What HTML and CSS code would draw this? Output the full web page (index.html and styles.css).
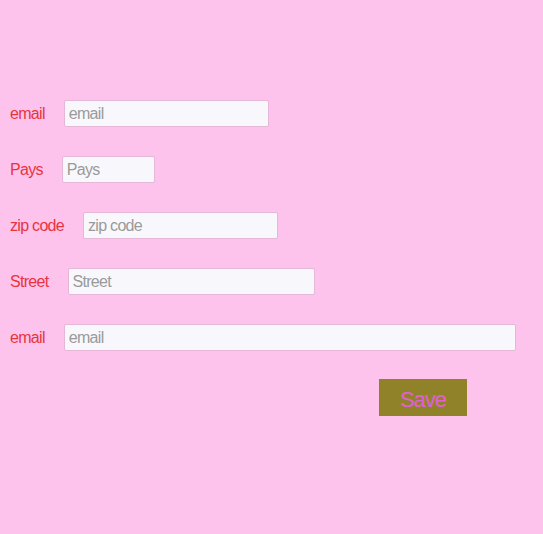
FILE: index.html
```html
<!DOCTYPE html>
<html>
<head>
<meta charset="utf-8">
<link rel="stylesheet" href="styles.css">
</head>
<body>
<form class="form">
  <div class="row"><label class="label">email</label><input class="field w-email" placeholder="email"></div>
  <div class="row"><label class="label">Pays</label><input class="field w-pays" placeholder="Pays"></div>
  <div class="row"><label class="label">zip code</label><input class="field w-zip" placeholder="zip code"></div>
  <div class="row"><label class="label">Street</label><input class="field w-street" placeholder="Street"></div>
  <div class="row"><label class="label">email</label><input class="field w-email2" placeholder="email"></div>
  <div class="actions"><button type="button" class="save">Save</button></div>
</form>
</body>
</html>
```
FILE: styles.css
```css
html, body {
  margin: 0;
  padding: 0;
  background: #fdc3ec;
}
body {
  font-family: "Liberation Sans", Arial, sans-serif;
  font-size: 16px;
}
.form {
  padding: 100px 0 0 10px;
  display: flex;
  flex-direction: column;
  gap: 29px;
}
.row {
  display: flex;
  align-items: center;
  height: 27px;
}
.label {
  color: #e8343f;
  margin-right: 19px;
  letter-spacing: -0.7px;
  padding-top: 1px;
}
.field {
  box-sizing: border-box;
  height: 27px;
  border: 1px solid #e4b8d6;
  border-radius: 2px;
  background: #f8f8fc;
  font-family: inherit;
  font-size: 16px;
  letter-spacing: -0.7px;
  padding: 1px 4px 0;
  color: #333;
  outline: none;
}
.field::placeholder { color: #9a9a9a; }
.w-email { width: 205px; }
.w-pays { width: 93px; }
.w-zip { width: 195px; }
.w-street { width: 247px; }
.w-email2 { width: 452px; }
.actions {
  display: flex;
  padding-left: 369px;
  margin-top: -1px;
}
.save {
  width: 88px;
  height: 37px;
  background: #8f8229;
  color: #e25fd6;
  border: none;
  border-radius: 0;
  font-family: inherit;
  font-size: 22px;
  letter-spacing: -1px;
  padding: 4px 0 0;
}
```
